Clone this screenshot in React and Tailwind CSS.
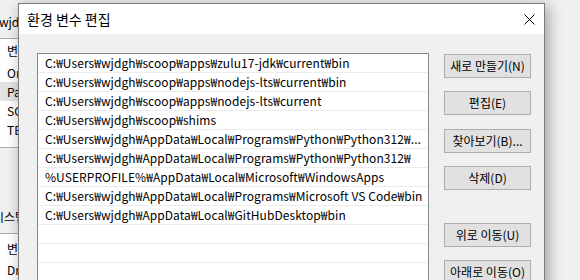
import React from "react";

const FONT = { fontFamily: '"Noto Sans CJK KR", "Noto Sans", sans-serif' };

const rows = [
  "C:₩Users₩wjdgh₩scoop₩apps₩zulu17-jdk₩current₩bin",
  "C:₩Users₩wjdgh₩scoop₩apps₩nodejs-lts₩current₩bin",
  "C:₩Users₩wjdgh₩scoop₩apps₩nodejs-lts₩current",
  "C:₩Users₩wjdgh₩scoop₩shims",
  "C:₩Users₩wjdgh₩AppData₩Local₩Programs₩Python₩Python312₩...",
  "C:₩Users₩wjdgh₩AppData₩Local₩Programs₩Python₩Python312₩",
  "%USERPROFILE%₩AppData₩Local₩Microsoft₩WindowsApps",
  "C:₩Users₩wjdgh₩AppData₩Local₩Programs₩Microsoft VS Code₩bin",
  "C:₩Users₩wjdgh₩AppData₩Local₩GitHubDesktop₩bin",
  "",
  "",
  "",
];

function Btn({ children, className = "" }) {
  return (
    <div
      className={`h-[24px] w-[87px] shrink-0 border border-[#adadad] bg-[#e1e1e1] flex items-center justify-center text-[12px] text-black whitespace-nowrap ${className}`}
    >
      {children}
    </div>
  );
}

export default function App() {
  return (
    <div className="relative w-[580px] h-[280px] overflow-hidden bg-[#f0f0f0] text-black" style={FONT}>
      {/* background window */}
      <div className="flex flex-col w-[300px] h-[280px] text-[12px]">
        <div className="h-[38px] shrink-0 flex items-center bg-[#f0f0f0] whitespace-nowrap">
          <span className="ml-[-1px] mt-[6px]">wjdgh에 대한 사용자 변수(U)</span>
        </div>
        <div className="h-[110px] shrink-0 border-y border-[#adadad] bg-white flex flex-col">
          <div className="h-[24px] shrink-0 flex items-center pl-[7px] whitespace-nowrap">변수</div>
          <div className="h-[19px] shrink-0 flex items-center pl-[7px]">OneDrive</div>
          <div className="h-[19px] shrink-0 flex items-center pl-[7px] bg-[#e3e3e3]">Path</div>
          <div className="h-[19px] shrink-0 flex items-center pl-[7px]">SCOOP</div>
          <div className="h-[19px] shrink-0 flex items-center pl-[7px]">TEMP</div>
        </div>
        <div className="h-[85px] shrink-0 flex items-end pb-[7px] whitespace-nowrap">
          <span className="ml-[-7px]">시스템 변수(S)</span>
        </div>
        <div className="flex-1 border-t border-[#adadad] bg-white flex flex-col">
          <div className="h-[28px] shrink-0 flex items-center pl-[7px] pt-[2px] whitespace-nowrap">변수</div>
          <div className="h-[16px] shrink-0 flex items-center pl-[7px]">DriverData</div>
        </div>
      </div>

      {/* dialog window */}
      <div className="absolute left-[18px] top-[3px] w-[527px] h-[300px] border border-[#7c7c7c] bg-[#f0f0f0] flex flex-col shadow-[3px_3px_14px_rgba(0,0,0,0.35)]">
        <div className="h-[30px] shrink-0 bg-white flex items-center justify-between">
          <span className="pl-[8px] text-[14px]">환경 변수 편집</span>
          <svg width="11" height="11" viewBox="0 0 11 11" className="mr-[9px]">
            <path d="M0.5 0.5 L10.5 10.5 M10.5 0.5 L0.5 10.5" stroke="#000" strokeWidth="1" fill="none" />
          </svg>
        </div>
        <div className="flex pl-[18px] pt-[19px] gap-[15px]">
          <div className="w-[392px] h-[245px] shrink-0 border border-[#828790] bg-white flex flex-col overflow-hidden">
            {rows.map((r, i) => (
              <div
                key={i}
                className="h-[19px] shrink-0 border-b border-[#ececec] flex items-center pl-[7px] text-[12px] tracking-[0.07px] whitespace-nowrap overflow-hidden"
              >
                {r}
              </div>
            ))}
          </div>
          <div className="flex flex-col">
            <Btn className="mt-[1px]">새로 만들기(N)</Btn>
            <Btn className="mt-[13px]">편집(E)</Btn>
            <Btn className="mt-[14px]">찾아보기(B)...</Btn>
            <Btn className="mt-[13px]">삭제(D)</Btn>
            <Btn className="mt-[33px]">위로 이동(U)</Btn>
            <Btn className="mt-[13px]">아래로 이동(O)</Btn>
          </div>
        </div>
      </div>
    </div>
  );
}
